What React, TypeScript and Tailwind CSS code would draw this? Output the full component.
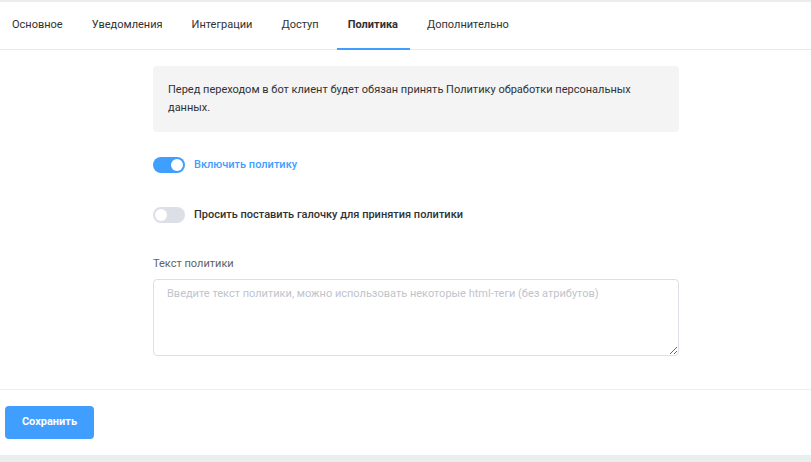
import React, { useState } from 'react';

const tabs = ['Основное', 'Уведомления', 'Интеграции', 'Доступ', 'Политика', 'Дополнительно'];

const Toggle: React.FC<{ on: boolean; onChange: () => void }> = ({ on, onChange }) => (
  <button
    onClick={onChange}
    className={`relative h-4 w-8 shrink-0 rounded-full transition-colors ${on ? 'bg-[#409eff]' : 'bg-[#dcdfe6]'}`}
  >
    <span
      className={`absolute top-[2px] h-3 w-3 rounded-full bg-white transition-all ${on ? 'left-[18px]' : 'left-[2px]'}`}
    />
  </button>
);

export default function App() {
  const [active, setActive] = useState('Политика');
  const [enabled, setEnabled] = useState(true);
  const [askCheck, setAskCheck] = useState(false);

  return (
    <div className="flex h-[462px] w-full flex-col bg-white text-[11px] text-[#303133]" style={{ fontFamily: 'Roboto, "Noto Sans", sans-serif' }}>
      <div className="h-[2px] bg-[#ebeeee]" />

      <div className="flex h-[48px] items-center gap-[29px] border-b border-[#e8eaee] pl-3">
        {tabs.map((tab) => (
          <button
            key={tab}
            onClick={() => setActive(tab)}
            className={`relative flex h-full items-center ${active === tab ? 'font-bold text-[#303133]' : 'text-[#303133]'}`}
          >
            {tab}
            {active === tab && <span className="absolute bottom-[-1px] left-[-11px] right-[-12px] h-[2px] bg-[#409eff]" />}
          </button>
        ))}
      </div>

      <div className="ml-[153px] flex w-[526px] flex-col pt-[16px]">
        <div className="rounded-[4px] bg-[#f4f4f5] px-[15px] py-[15px] leading-[18px] text-[#303133]">
          Перед переходом в бот клиент будет обязан принять Политику обработки персональных данных.
        </div>

        <div className="mt-[25px] flex items-center gap-[9px]">
          <Toggle on={enabled} onChange={() => setEnabled(!enabled)} />
          <span className={`font-medium ${enabled ? 'text-[#409eff]' : 'text-[#303133]'}`}>Включить политику</span>
        </div>

        <div className="mt-[33px] flex items-center gap-[9px]">
          <Toggle on={askCheck} onChange={() => setAskCheck(!askCheck)} />
          <span className={`font-medium ${askCheck ? 'text-[#409eff]' : 'text-[#303133]'}`}>
            Просить поставить галочку для принятия политики
          </span>
        </div>

        <label className="mt-[32px] leading-[18px] text-[#606266]">Текст политики</label>
        <textarea
          className="mt-[6px] h-[77px] w-full rounded-[4px] border border-[#dcdfe6] px-[13px] py-[5px] leading-[18px] text-[#606266] outline-none placeholder:text-[#c0c4cc] focus:border-[#409eff]"
          placeholder="Введите текст политики, можно использовать некоторые html-теги (без атрибутов)"
        />
      </div>

      <div className="mt-[33px] border-t border-[#ebeef5] px-[5px] pt-[16px]">
        <button className="h-[33px] w-[89px] rounded-[4px] bg-[#409eff] font-bold text-white hover:bg-[#66b1ff]">
          Сохранить
        </button>
      </div>

      <div className="flex-1" />
      <div className="h-[7px] bg-[#ebeeee]" />
    </div>
  );
}
